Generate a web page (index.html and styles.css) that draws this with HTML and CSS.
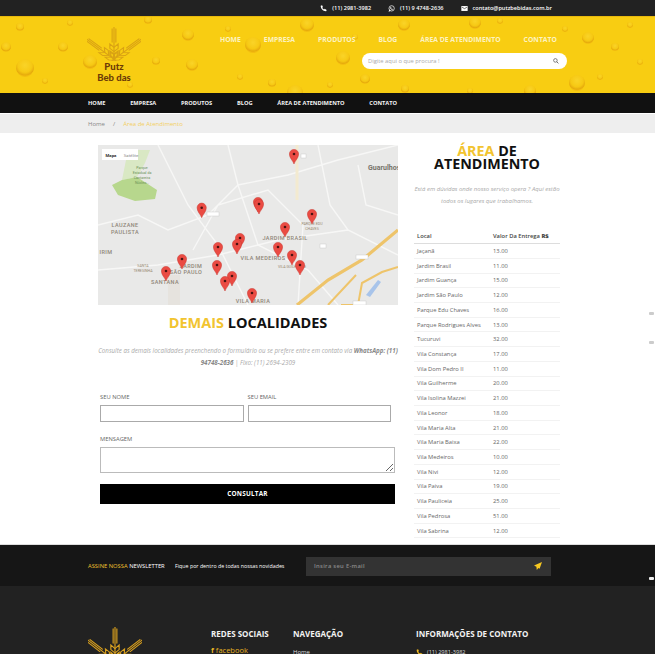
FILE: index.html
```html
<!DOCTYPE html>
<html lang="pt-BR">
<head>
    <meta charset="UTF-8">
    <title>Área de Atendimento - Putz Bebidas</title>
    <link rel="stylesheet" href="styles.css">
</head>
<body>
    <svg class="defs" width="0" height="0">
        <defs>
            <radialGradient id="drop" cx="50%" cy="35%" r="60%">
                <stop offset="0" stop-color="#fbd62e"/>
                <stop offset="0.65" stop-color="#f6c814"/>
                <stop offset="0.9" stop-color="#e3a40c"/>
                <stop offset="1" stop-color="#f2b90f"/>
            </radialGradient>
            <symbol id="wheat" viewBox="0 0 52 40" preserveAspectRatio="none">
                <g fill="none" stroke="currentColor" stroke-width="1.100" stroke-linecap="round">
                    <g id="stalk">
                        <path d="M26 40V16M24.200 18V2M26 16V0M27.800 18V2"/>
                        <path d="M26 24l-4-4v5l4 4 4-4v-5zM26 32l-4-4v5l4 4 4-4v-5z"/>
                    </g>
                    <g transform="rotate(-48 26 38)"><use href="#stalk" y="2"/></g>
                    <g transform="rotate(48 26 38)"><use href="#stalk" y="2"/></g>
                </g>
            </symbol>
            <symbol id="pin" viewBox="-6 -6 12 19" overflow="visible">
                <path d="M0 10C-.8 7-4.600 4.200-4.600 0A4.600 4.600 0 1 1 4.600 0C4.600 4.200.8 7 0 10Z" fill="#ea4b43" stroke="#c93a33" stroke-width=".5"/>
                <circle r="1.300" fill="#4a1311"/>
            </symbol>
            <symbol id="ico-phone" viewBox="0 0 10 10">
                <path d="M1 1.200 3 .5l1.200 2.400-1 .9c.5 1.200 1.400 2.100 2.600 2.600l.9-1L9.500 7l-.7 2C4.500 9.200.8 5.500 1 1.200Z" fill="currentColor"/>
            </symbol>
        </defs>
    </svg>

    <div class="topbar">
        <span class="top-item"><svg class="ico"><use href="#ico-phone"/></svg>(11) 2981-3982</span>
        <span class="top-item">
            <svg class="ico" viewBox="0 0 10 10"><circle cx="5.200" cy="4.800" r="3.800" fill="none" stroke="currentColor" stroke-width="1"/><path d="M.8 9.500l1.100-3 1.900 2zM3.600 3.200l1 .1.300 1-.4.500c.3.500.6.800 1.100 1l.5-.4 1 .4c0 .9-.8 1.200-1.500 1-1.300-.4-2.300-1.400-2.600-2.600-.1-.5.100-1 .6-1z" fill="currentColor"/></svg>
            (11) 9 4748-2636
        </span>
        <span class="top-item">
            <svg class="ico" viewBox="0 0 10 10"><path d="M.5 1.500h9v7h-9z" fill="currentColor"/><path d="M1.500 3.200 5 5.200l3.500-2" fill="none" stroke="#222" stroke-width=".9"/></svg>
            contato@putzbebidas.com.br
        </span>
    </div>

    <header class="header">
        <svg class="drops" viewBox="0 0 655 76" preserveAspectRatio="none">
            <g fill="url(#drop)">
                <circle cx="188" cy="18" r="6"/><circle cx="253" cy="28" r="8"/><circle cx="307" cy="8" r="7"/>
                <circle cx="343" cy="41" r="7"/><circle cx="404" cy="8" r="6"/><circle cx="25" cy="51" r="9"/>
                <circle cx="192" cy="48" r="6"/><circle cx="63" cy="30" r="5"/><circle cx="6" cy="30" r="5"/>
                <circle cx="475" cy="6" r="6"/><circle cx="588" cy="21" r="6"/><circle cx="577" cy="66" r="8"/>
                <circle cx="295" cy="76" r="8"/><circle cx="90" cy="45" r="7"/><circle cx="156" cy="44" r="4"/>
                <circle cx="148" cy="3" r="4"/><circle cx="20" cy="10" r="4"/><circle cx="272" cy="66" r="4"/>
                <circle cx="355" cy="20" r="3"/><circle cx="440" cy="22" r="3"/><circle cx="615" cy="30" r="4"/>
                <circle cx="640" cy="45" r="3"/><circle cx="530" cy="74" r="6"/><circle cx="365" cy="62" r="5"/>
                <circle cx="330" cy="68" r="3"/><circle cx="228" cy="12" r="3"/><circle cx="45" cy="64" r="3"/>
                <circle cx="130" cy="68" r="3"/><circle cx="600" cy="60" r="3"/><circle cx="630" cy="8" r="3"/>
                <circle cx="500" cy="4" r="3"/><circle cx="240" cy="60" r="3"/><circle cx="405" cy="72" r="4"/>
                <circle cx="470" cy="74" r="3"/><circle cx="565" cy="12" r="3"/><circle cx="70" cy="6" r="3"/>
            </g>
        </svg>
        <div class="logo">
            <svg class="wheat logo-wheat"><use href="#wheat"/></svg>
            <span class="logo-line">Putz</span>
            <span class="logo-line">Beb das</span>
        </div>
        <div class="header-right">
            <nav class="nav-main">
                <a>HOME</a><a>EMPRESA</a><a>PRODUTOS</a><a>BLOG</a><a>ÁREA DE ATENDIMENTO</a><a>CONTATO</a>
            </nav>
            <div class="search">
                <span>Digite aqui o que procura !</span>
                <svg class="search-ico" viewBox="0 0 10 10"><circle cx="4" cy="4" r="3" fill="none" stroke="#555" stroke-width="1.200"/><path d="M6.200 6.200 9 9" stroke="#555" stroke-width="1.400"/></svg>
            </div>
        </div>
    </header>

    <nav class="nav-dark">
        <a>HOME</a><a>EMPRESA</a><a>PRODUTOS</a><a>BLOG</a><a>ÁREA DE ATENDIMENTO</a><a>CONTATO</a>
    </nav>

    <div class="breadcrumb"><span>Home</span><span class="sep">/</span><span class="crumb-on">Área de Atendimento</span></div>

    <main class="main">
        <section class="left">
            <svg class="map" viewBox="0 0 300 160">
                <rect width="300" height="160" fill="#e9e9e8"/>
                <path d="M30 5H52L47 18 39 32 24 35Z" fill="#d9e8c4"/>
                <path d="M24 35 39 32 59 45 57 54 37 56 20 50 14 40Z" fill="#b7d78d"/>
                <path d="M0 80 40 70 70 85 110 70 140 40 190 30 240 15 300 0M60 0 90 60 120 100 150 160M140 40 160 100 210 125 240 160M95 105 120 60 170 45 205 80 200 160M0 125 60 120 120 110 180 95 250 85M220 0 232 60 250 85 300 110M130 0 140 40M260 20 268 60 300 70" fill="none" stroke="#f7f7f6" stroke-width="1.400"/>
                <path d="M199 0V55" stroke="#f3ead0" stroke-width="3" fill="none"/>
                <path d="M199 160 230 135 264 115 300 85" stroke="#eec46a" stroke-width="3.200" fill="none"/>
                <path d="M260 160 264 138 284 127 300 122M243 160H262M230 160 258 130" stroke="#eec46a" stroke-width="2" fill="none"/>
                <path d="M268 150 280 135 283 137 272 152Z" fill="#a8c4ea"/>
                <rect x="70" y="130" width="12" height="30" fill="#e6e3de"/>
                <g class="shields">
                    <rect x="109" y="67" width="12" height="4"/>
                    <rect x="222" y="99" width="6" height="4"/>
                    <rect x="258" y="110" width="12" height="4"/>
                    <rect x="203" y="9" width="5" height="4"/>
                    <rect x="255" y="156" width="13" height="4"/>
                </g>
                <text class="map-text map-park" x="44" y="24">Parque</text>
                <text class="map-text map-park" x="44" y="29">Estadual da</text>
                <text class="map-text map-park" x="44" y="34">Cantareira</text>
                <text class="map-text map-park" x="44" y="39">Núcleo...</text>
                <text class="map-text map-area" x="27" y="82">LAUZANE</text>
                <text class="map-text map-area" x="27" y="89">PAULISTA</text>
                <text class="map-text map-area" x="8" y="109">IRIM</text>
                <text class="map-text map-small" x="45" y="122">SANTA</text>
                <text class="map-text map-small" x="45" y="127">TERESINHA</text>
                <text class="map-text map-area" x="93" y="123">JARDIM</text>
                <text class="map-text map-area" x="88" y="129">SÃO PAULO</text>
                <text class="map-text map-area" x="67" y="139">SANTANA</text>
                <text class="map-text map-area" x="187" y="95">JARDIM BRASIL</text>
                <text class="map-text map-area" x="165" y="115">VILA MEDEIROS</text>
                <text class="map-text map-small" x="194" y="123">VILA GUILHERME</text>
                <text class="map-text map-small" x="214" y="80">PARQUE EDU</text>
                <text class="map-text map-small" x="214" y="85">CHAVES</text>
                <text class="map-text map-area" x="155" y="158">VILA MARIA</text>
                <text class="map-text map-city" x="270" y="25">Guarulhos</text>
                <g class="pins">
                    <use href="#pin" x="-6" y="-6" width="12" height="19" transform="translate(196 9)"/>
                    <use href="#pin" x="-6" y="-6" width="12" height="19" transform="translate(103.700 62.700)"/>
                    <use href="#pin" x="-6" y="-6" width="12" height="19" transform="translate(160 57)"/>
                    <use href="#pin" x="-6" y="-6" width="12" height="19" transform="translate(161 59)"/>
                    <use href="#pin" x="-6" y="-6" width="12" height="19" transform="translate(214 69)"/>
                    <use href="#pin" x="-6" y="-6" width="12" height="19" transform="translate(187 82)"/>
                    <use href="#pin" x="-6" y="-6" width="12" height="19" transform="translate(142 93)"/>
                    <use href="#pin" x="-6" y="-6" width="12" height="19" transform="translate(139 99)"/>
                    <use href="#pin" x="-6" y="-6" width="12" height="19" transform="translate(120 102)"/>
                    <use href="#pin" x="-6" y="-6" width="12" height="19" transform="translate(180 102)"/>
                    <use href="#pin" x="-6" y="-6" width="12" height="19" transform="translate(194 110)"/>
                    <use href="#pin" x="-6" y="-6" width="12" height="19" transform="translate(202 120)"/>
                    <use href="#pin" x="-6" y="-6" width="12" height="19" transform="translate(84 114)"/>
                    <use href="#pin" x="-6" y="-6" width="12" height="19" transform="translate(119 120)"/>
                    <use href="#pin" x="-6" y="-6" width="12" height="19" transform="translate(68 126)"/>
                    <use href="#pin" x="-6" y="-6" width="12" height="19" transform="translate(134 131)"/>
                    <use href="#pin" x="-6" y="-6" width="12" height="19" transform="translate(127 136)"/>
                    <use href="#pin" x="-6" y="-6" width="12" height="19" transform="translate(154 148)"/>
                </g>
                <rect x="4" y="4" width="36" height="11" fill="#fff"/>
                <text class="map-text map-tab-on" x="13" y="11.500">Mapa</text>
                <text class="map-text map-tab" x="33" y="11.500">Satélite</text>
            </svg>

            <h2 class="title title-wide"><span class="accent">DEMAIS</span> LOCALIDADES</h2>
            <p class="intro intro-wide">Consulte as demais localidades preenchendo o formulário ou se prefere entre em contato via <b>WhatsApp: (11) 94748-2636</b> | Fixo: (11) 2694-2309</p>

            <form class="form">
                <div class="form-row">
                    <label class="field">SEU NOME<input type="text"></label>
                    <label class="field">SEU EMAIL<input type="text"></label>
                </div>
                <label class="field field-msg">MENSAGEM<textarea></textarea></label>
                <button type="button" class="submit">CONSULTAR</button>
            </form>
        </section>

        <aside class="right">
            <h2 class="title title-narrow"><span class="accent">ÁREA</span> DE ATENDIMENTO</h2>
            <p class="intro intro-narrow">Está em dúvidas onde nosso serviço opera ? Aqui estão todos os lugares que trabalhamos.</p>
            <table class="prices">
                <thead><tr><th>Local</th><th>Valor Da Entrega <b>R$</b></th></tr></thead>
                <tbody>
                    <tr><td>Jaçanã</td><td>13.00</td></tr>
                    <tr><td>Jardim Brasil</td><td>11.00</td></tr>
                    <tr><td>Jardim Guança</td><td>15.00</td></tr>
                    <tr><td>Jardim São Paulo</td><td>12.00</td></tr>
                    <tr><td>Parque Edu Chaves</td><td>16.00</td></tr>
                    <tr><td>Parque Rodrigues Alves</td><td>13.00</td></tr>
                    <tr><td>Tucuruvi</td><td>32.00</td></tr>
                    <tr><td>Vila Constança</td><td>17.00</td></tr>
                    <tr><td>Vila Dom Pedro II</td><td>11.00</td></tr>
                    <tr><td>Vila Guilherme</td><td>20.00</td></tr>
                    <tr><td>Vila Isolina Mazzei</td><td>21.00</td></tr>
                    <tr><td>Vila Leonor</td><td>18.00</td></tr>
                    <tr><td>Vila Maria Alta</td><td>21.00</td></tr>
                    <tr><td>Vila Maria Baixa</td><td>22.00</td></tr>
                    <tr><td>Vila Medeiros</td><td>10.00</td></tr>
                    <tr><td>Vila Nivi</td><td>12.00</td></tr>
                    <tr><td>Vila Paiva</td><td>19.00</td></tr>
                    <tr><td>Vila Pauliceia</td><td>25.00</td></tr>
                    <tr><td>Vila Pedrosa</td><td>51.00</td></tr>
                    <tr><td>Vila Sabrina</td><td>12.00</td></tr>
                </tbody>
            </table>
        </aside>
    </main>

    <section class="newsletter">
        <span class="news-title"><span class="accent">ASSINE NOSSA</span> NEWSLETTER</span>
        <span class="news-text">Fique por dentro de todas nossas novidades</span>
        <div class="news-input">
            <span>Insira seu E-mail</span>
            <svg class="send-ico" viewBox="0 0 10 10"><path d="M10 0 0 4.500l3 1.500.5 4 2-2.500 1.500 1z" fill="#f7c820"/></svg>
        </div>
    </section>

    <footer class="footer">
        <div class="foot-logo"><svg class="wheat foot-wheat"><use href="#wheat"/></svg></div>
        <div class="foot-col foot-social">
            <h3>REDES SOCIAIS</h3>
            <a class="fb"><b>f</b> facebook</a>
        </div>
        <div class="foot-col foot-nav">
            <h3>NAVEGAÇÃO</h3>
            <a>Home</a>
        </div>
        <div class="foot-col foot-info">
            <h3>INFORMAÇÕES DE CONTATO</h3>
            <a><svg class="ico foot-ico"><use href="#ico-phone"/></svg>(11) 2981-3982</a>
        </div>
    </footer>

    <span class="edge-mark edge-1"></span>
    <span class="edge-mark edge-2"></span>
    <span class="edge-mark edge-3"></span>
</body>
</html>
```

FILE: styles.css
```css
html, body {
    margin: 0;
    padding: 0;
    height: 655px;
    overflow: hidden;
}
body {
    position: relative;
    font-family: "Open Sans", "Liberation Sans", sans-serif;
    background-color: #fff;
    color: #555;
}
.defs {
    position: absolute;
}
a {
    text-decoration: none;
    white-space: nowrap;
}
.accent {
    color: #f2c430;
}

/* topo */
.topbar {
    height: 16px;
    background-color: #222;
    display: flex;
    justify-content: flex-end;
    align-items: center;
    gap: 17px;
    padding-right: 103px;
    font-size: 5.600px;
    font-weight: 600;
    color: #fff;
}
.top-item {
    display: flex;
    align-items: center;
    gap: 5px;
}
.ico {
    width: 7px;
    height: 7px;
    color: #fff;
}

.header {
    position: relative;
    height: 76px;
    background-color: #f8cd12;
    border-top: 1px solid #e8b90d;
    display: flex;
    padding-left: 86px;
    overflow: hidden;
}
.drops {
    position: absolute;
    left: 0;
    top: 0;
    width: 655px;
    height: 76px;
    opacity: .8;
}
.logo {
    position: relative;
    width: 56px;
    margin-top: 10px;
    display: flex;
    flex-direction: column;
    align-items: center;
    font-family: "Lato", sans-serif;
    font-weight: 900;
    color: #6d3c07;
    line-height: 11px;
    font-size: 9.500px;
}
.wheat {
    display: block;
}
.logo-wheat {
    width: 54px;
    height: 34px;
    color: #d9a214;
}
.header-right {
    position: relative;
    width: 347px;
    margin-left: 78px;
    display: flex;
    flex-direction: column;
    align-items: flex-end;
}
.nav-main {
    align-self: flex-start;
    display: flex;
    gap: 23px;
    margin-top: 18px;
    font-size: 6.800px;
    line-height: 10px;
    font-weight: 700;
    color: #fdf3c0;
}
.search {
    width: 205px;
    height: 16px;
    margin-top: 8px;
    border-radius: 8px;
    background-color: #fff;
    display: flex;
    align-items: center;
    justify-content: space-between;
    padding: 0 8px 0 6px;
    box-sizing: border-box;
    font-size: 5.800px;
    color: #aaa;
}
.search-ico {
    width: 6px;
    height: 6px;
}

.nav-dark {
    height: 20px;
    background-color: #111;
    display: flex;
    align-items: center;
    gap: 24.700px;
    padding-left: 88px;
    font-size: 5.700px;
    font-weight: 700;
    color: #f4f4f4;
}
.breadcrumb {
    height: 19px;
    margin-top: 1px;
    background-color: #eee;
    display: flex;
    align-items: center;
    gap: 8px;
    padding-left: 88px;
    font-size: 6px;
    color: #888;
}
.crumb-on {
    color: #f3cf62;
}

/* conteudo */
.main {
    height: 411px;
    display: flex;
    padding-left: 98px;
    gap: 16px;
}
.left {
    width: 300px;
}
.map {
    display: block;
    width: 300px;
    height: 160px;
    margin-top: 12px;
}
.shields rect {
    fill: #fff;
    stroke: #c4c4c4;
    stroke-width: .4;
}
.map-text {
    font-family: "Roboto", sans-serif;
    text-anchor: middle;
}
.map-park {
    font-size: 3.600px;
    fill: #6b9258;
}
.map-area {
    font-size: 5.500px;
    letter-spacing: .4px;
    fill: #8f8678;
    font-weight: 500;
}
.map-small {
    font-size: 3.600px;
    fill: #98886f;
}
.map-city {
    font-size: 7px;
    font-weight: 700;
    fill: #77736b;
    text-anchor: start;
}
.map-tab-on {
    font-size: 4.300px;
    font-weight: 700;
    fill: #333;
}
.map-tab {
    font-size: 4.300px;
    fill: #888;
}

.title {
    margin: 0;
    text-align: center;
    color: #111;
    font-weight: 700;
}
.title-wide {
    margin-top: 9px;
    font-size: 14.500px;
    line-height: 18px;
}
.title-narrow {
    margin: 11px auto 0;
    width: 130px;
    font-size: 14.300px;
    line-height: 13px;
}
.intro {
    margin: 0;
    text-align: center;
    font-style: italic;
    color: #aaa;
    line-height: 12.300px;
}
.intro b {
    color: #888;
}
.intro-wide {
    margin-top: 13px;
    font-size: 6.200px;
}
.intro-narrow {
    margin-top: 13px;
    font-size: 6px;
}

.form {
    margin-top: 23px;
    padding-left: 2px;
}
.form-row {
    display: flex;
    gap: 4px;
}
.field {
    display: block;
    width: 143.500px;
    font-size: 5.800px;
    line-height: 9px;
    color: #666;
}
.field input, .field textarea {
    display: block;
    box-sizing: border-box;
    width: 100%;
    margin-top: 3px;
    border: 1px solid #aaa;
    background-color: #fff;
    padding: 0;
    outline: none;
}
.field input {
    height: 17px;
}
.field-msg {
    width: 295px;
    margin-top: 13px;
}
.field textarea {
    height: 26px;
    border-color: #bbb;
    resize: vertical;
}
.submit {
    display: block;
    width: 295px;
    height: 20px;
    margin-top: 11px;
    border: none;
    background-color: #000;
    color: #fff;
    font-family: inherit;
    font-size: 6.400px;
    font-weight: 700;
    letter-spacing: .2px;
}

.right {
    width: 146px;
}
.prices {
    width: 146px;
    margin-top: 20.500px;
    border-collapse: collapse;
    font-size: 5.800px;
    color: #666;
    text-align: left;
}
.prices th {
    font-weight: 600;
    color: #444;
    height: 15px;
    border-bottom: 1px solid #ddd;
    padding: 0 0 0 3px;
}
.prices td {
    height: 13.720px;
    padding: 0 0 0 3px;
    border-bottom: 1px solid #f2f2f2;
    line-height: 8px;
}
.prices th:first-child, .prices td:first-child {
    width: 73px;
}

/* rodape */
.newsletter {
    height: 42px;
    border-top: 1px solid #ddd;
    box-sizing: border-box;
    background-color: #161616;
    display: flex;
    align-items: center;
    padding: 1px 0 0 88px;
    font-size: 5.800px;
    color: #fff;
}
.news-title {
    width: 87px;
}
.news-text {
    width: 131px;
    font-size: 5.300px;
}
.news-input {
    width: 245px;
    height: 19px;
    background-color: #333;
    display: flex;
    align-items: center;
    justify-content: space-between;
    padding: 0 9px 0 8px;
    box-sizing: border-box;
    color: #8a8a8a;
    font-weight: 600;
    letter-spacing: .3px;
}
.send-ico {
    width: 8px;
    height: 8px;
}
.footer {
    height: 68px;
    background-color: #222;
    display: flex;
    padding-left: 88px;
    color: #eee;
    overflow: hidden;
}
.foot-logo {
    width: 123px;
    padding-top: 41px;
}
.foot-wheat {
    width: 54px;
    height: 36px;
    color: #d9a01e;
}
.foot-col {
    padding-top: 43px;
    font-size: 6px;
    line-height: 8px;
}
.foot-col h3 {
    margin: 0 0 9px;
    font-size: 8px;
    line-height: 10px;
    font-weight: 700;
    color: #f2f2f2;
}
.foot-col a {
    display: flex;
    align-items: center;
    gap: 4px;
    color: #ddd;
}
.foot-social {
    width: 82px;
}
.foot-nav {
    width: 123px;
}
.foot-info {
    font-size: 5.600px;
}
.foot-col .fb {
    color: #e6b422;
    font-size: 7.500px;
    line-height: 9px;
    margin-top: -2px;
    gap: 0;
    white-space: pre;
}
.foot-ico {
    color: #f2b91f;
}

/* marcas na borda direita */
.edge-mark {
    position: absolute;
    left: 649px;
    width: 5px;
    height: 3px;
    background-color: #ccc;
    border-radius: 1px;
}
.edge-1 {
    top: 312px;
}
.edge-2 {
    top: 341px;
}
.edge-3 {
    top: 577px;
    background-color: #eee;
}
```
